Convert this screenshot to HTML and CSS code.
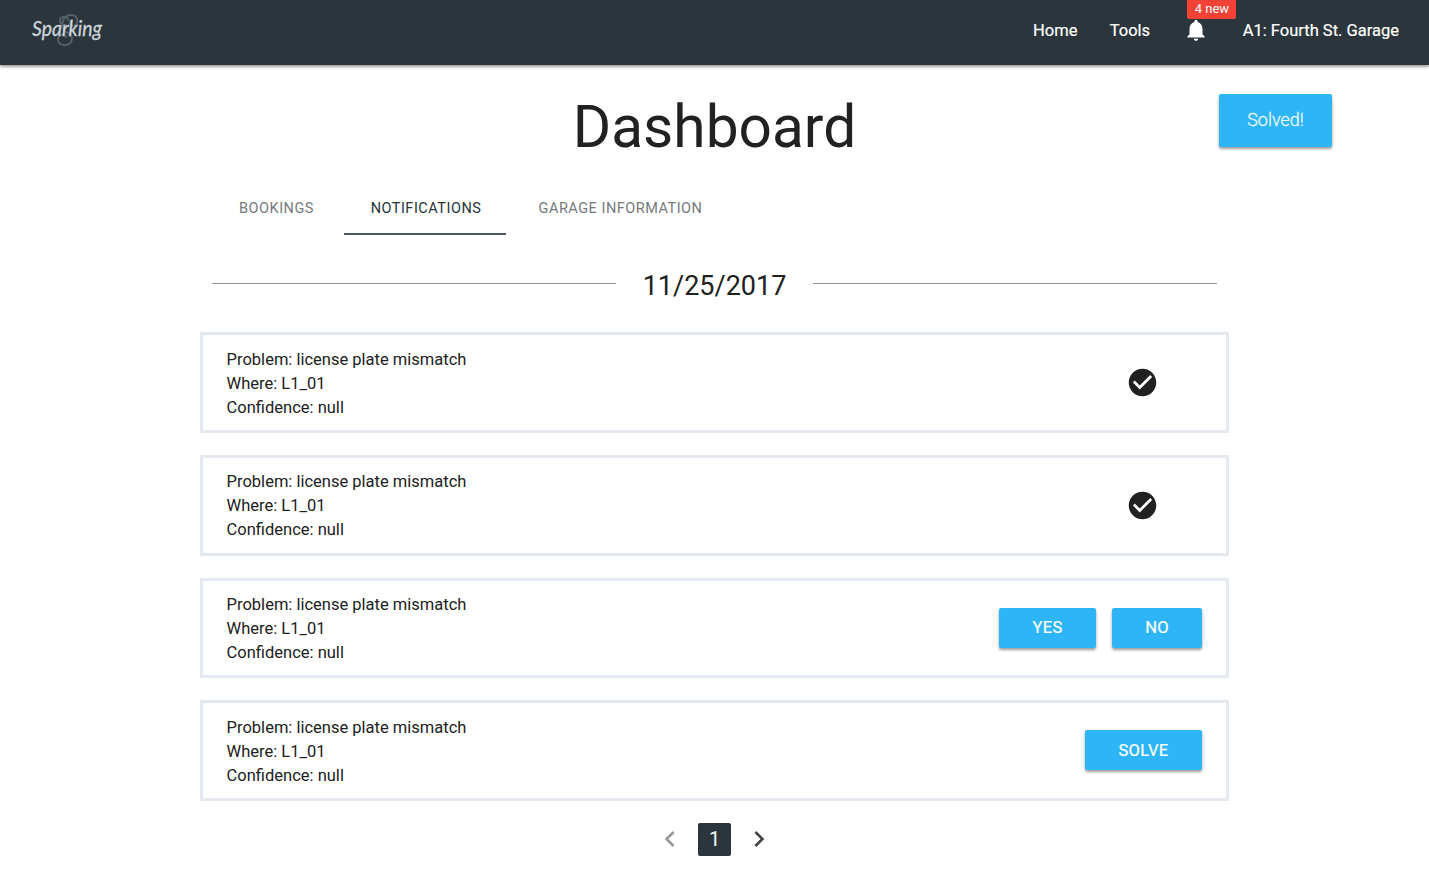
FILE: index.html
```html
<!DOCTYPE html>
<html lang="en">
<head>
<meta charset="utf-8">
<title>Sparking Dashboard</title>
<link rel="stylesheet" href="styles.css">
</head>
<body>
<nav class="navbar">
  <svg class="logo" width="84" height="44" viewBox="0 0 84 44">
    <path class="logo-mark" d="M37 14C30 14 29 7 34 6C37 5 39 7 39 9M35 20C30 12 36 4 42 4C50 4 50 14 44 15C40 15 40 10 43 9M35 20C38 22 43 22 43 28C42 36 30 36 29 29C29 23 36 22 37 26"/>
    <text class="logo-text" x="3" y="25" textLength="70" lengthAdjust="spacingAndGlyphs">Sparking</text>
  </svg>
  <ul class="nav-links">
    <li>Home</li>
    <li>Tools</li>
    <li class="bell">
      <svg width="26" height="26" viewBox="0 0 24 24"><path fill="#fff" d="M12 22c1.100 0 2-.9 2-2h-4c0 1.100.89 2 2 2zm6-6v-5c0-3.070-1.640-5.640-4.500-6.320V4c0-.83-.67-1.500-1.500-1.500s-1.500.67-1.500 1.500v.68C7.630 5.360 6 7.920 6 11v5l-2 2v1h16v-1l-2-2z"/></svg>
      <span class="badge">4 new</span>
    </li>
    <li>A1: Fourth St. Garage</li>
  </ul>
</nav>
<div class="toast">Solved!</div>
<main class="container">
  <h1 class="title"><span>Dashboard</span></h1>
  <div class="tabs">
    <a class="tab tab-bookings"><span>BOOKINGS</span></a>
    <a class="tab tab-notifications active"><span>NOTIFICATIONS</span></a>
    <a class="tab tab-garage"><span>GARAGE INFORMATION</span></a>
  </div>
  <div class="date-row"><hr><span class="date">11/25/2017</span><hr></div>
  <section class="cards">
    <article class="card">
      <p>Problem: license plate mismatch<br>Where: L1_01<br>Confidence: null</p>
      <svg class="check" width="33" height="33" viewBox="0 0 24 24"><path fill="#212121" d="M12 2C6.480 2 2 6.480 2 12s4.480 10 10 10 10-4.480 10-10S17.520 2 12 2zm-2 15l-5-5 1.410-1.410L10 14.170l7.590-7.590L19 8l-9 9z"/></svg>
    </article>
    <article class="card">
      <p>Problem: license plate mismatch<br>Where: L1_01<br>Confidence: null</p>
      <svg class="check" width="33" height="33" viewBox="0 0 24 24"><path fill="#212121" d="M12 2C6.480 2 2 6.480 2 12s4.480 10 10 10 10-4.480 10-10S17.520 2 12 2zm-2 15l-5-5 1.410-1.410L10 14.170l7.590-7.590L19 8l-9 9z"/></svg>
    </article>
    <article class="card">
      <p>Problem: license plate mismatch<br>Where: L1_01<br>Confidence: null</p>
      <div class="actions"><button class="btn yes">YES</button><button class="btn no">NO</button></div>
    </article>
    <article class="card">
      <p>Problem: license plate mismatch<br>Where: L1_01<br>Confidence: null</p>
      <div class="actions"><button class="btn solve">SOLVE</button></div>
    </article>
  </section>
  <div class="pagination">
    <svg width="32" height="32" viewBox="0 0 24 24"><path fill="#999" d="M15.410 7.410L14 6l-6 6 6 6 1.410-1.410L10.830 12z"/></svg>
    <span class="page">1</span>
    <svg width="32" height="32" viewBox="0 0 24 24"><path fill="#444" d="M10 6L8.590 7.410 13.170 12l-4.580 4.590L10 18l6-6z"/></svg>
  </div>
</main>
</body>
</html>
```
FILE: styles.css
```css
* { box-sizing: border-box; }
body {
  margin: 0;
  height: 877px;
  overflow: hidden;
  background: #fff;
  color: #212121;
  font-family: Roboto, "Liberation Sans", sans-serif;
  font-size: 16.5px;
}
.navbar {
  height: 65px;
  padding: 0 30px 0 29px;
  display: flex;
  justify-content: space-between;
  background: #2b353b;
  color: #fff;
  box-shadow: 0 2px 2px rgba(0,0,0,.2), 0 1px 4px rgba(0,0,0,.3);
}
.logo { margin-top: 11px; }
.logo-mark { fill: none; stroke: #566167; stroke-width: 2; stroke-linecap: round; }
.logo-text { font: italic 22px Lato, sans-serif; fill: #ccd4da; stroke: #ccd4da; stroke-width: .3; }
.nav-links {
  display: flex;
  gap: 32.300px;
  height: 60px;
  margin: 0;
  padding: 0;
  align-items: center;
  list-style: none;
  font-size: 16.500px;
  -webkit-text-stroke: .2px #fff;
}
.bell { position: relative; width: 28px; padding-left: 1px; display: flex; }
.badge {
  position: absolute;
  left: 5px;
  top: -19px;
  width: 49px;
  height: 21px;
  line-height: 21px;
  text-align: center;
  border-radius: 2px;
  background: #f44336;
  font-size: 13px;
  -webkit-text-stroke: 0;
}
.toast {
  position: absolute;
  top: 94px;
  left: 1219px;
  width: 113px;
  height: 53px;
  line-height: 51px;
  text-align: center;
  color: #eaf7ff;
  font-size: 18px;
  font-weight: 300;
  -webkit-text-stroke: .3px #eaf7ff;
  border-radius: 2px;
  background: #2eb5f7;
  box-shadow: 0 2px 3px rgba(0,0,0,.4);
}
.container { width: 1029px; margin: 0 auto; }
.title { margin: 28px 0 0; font-size: 58.600px; line-height: 68px; font-weight: 400; text-align: center; }
.tabs { display: flex; height: 53px; margin-top: 21px; padding-left: 11px; font-size: 14.500px; letter-spacing: .5px; }
.tab { text-align: center; line-height: 54px; height: 53px; color: #75797d; }
.tab-bookings { width: 133px; padding-right: 2px; }
.tab-notifications { width: 162px; padding-left: 2px; }
.tab-garage { width: 229px; }
.active { color: #263238; border-bottom: 2px solid #455a64; }
.date-row { display: flex; align-items: center; height: 40px; margin: 31px 12px 0; }
.date-row hr { flex: 1; height: 1px; margin: 0; border: 0; background: #949494; position: relative; top: -3px; }
.date { width: 197px; text-align: center; font-size: 27px; }
.cards { display: flex; flex-direction: column; gap: 22px; margin-top: 26.400px; }
.card {
  display: flex;
  align-items: center;
  justify-content: space-between;
  height: 100.600px;
  border: 3px solid #e4e9f0;
  padding: 0 24px;
}
.card p { margin: 0 0 0 -.4px; padding-top: 2.200px; line-height: 24px; }
.check { margin-right: 43.500px; }
.actions { display: flex; gap: 16px; }
.btn {
  height: 40px;
  padding: 0;
  border: 0;
  border-radius: 2px;
  background: #2eb5f7;
  color: #fff;
  font: 400 16.500px Roboto, sans-serif;
  letter-spacing: .3px;
  -webkit-text-stroke: .2px #fff;
  box-shadow: 0 2px 3px rgba(0,0,0,.4);
}
.yes { width: 97px; }
.no { width: 90px; }
.solve { width: 117px; }
.pagination { display: flex; justify-content: center; align-items: center; gap: 12px; margin-top: 22px; }
.page { width: 33px; height: 33px; line-height: 33px; border-radius: 2px; background: #2b353b; color: #fff; text-align: center; font-size: 20px; }
```
